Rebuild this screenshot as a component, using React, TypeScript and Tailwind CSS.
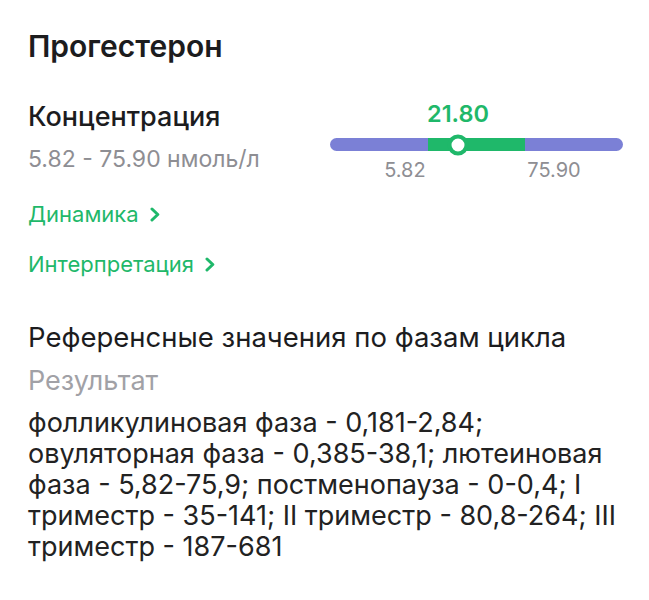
import React from "react";

const Chevron = () => (
  <svg width="10" height="15" viewBox="0 0 10 15" className="inline-block ml-[11px]" fill="none">
    <path d="M2 2 L7.8 7.5 L2 13" stroke="#1fb86a" strokeWidth="3" strokeLinecap="round" strokeLinejoin="round" />
  </svg>
);

export default function App() {
  return (
    <div className="w-[649px] h-[600px] bg-white pl-[28px] pr-[26px] pt-[28px] text-[#1c1c1e]" style={{ fontFamily: "Inter, 'Noto Sans', sans-serif" }}>
      <h1 className="text-[30px] leading-[36px] font-semibold">Прогестерон</h1>

      <div className="mt-[36px] flex items-start justify-between">
        <div className="pt-[1px] flex flex-col">
          <div className="text-[27px] leading-[32px] font-medium">Концентрация</div>
          <div className="mt-[12px] text-[23px] leading-[28px] text-[#8e8e93]">5.82 - 75.90 нмоль/л</div>
          <div className="mt-[27px] text-[22px] leading-[28px] text-[#1fb86a] flex items-center">Динамика<Chevron /></div>
          <div className="mt-[22px] text-[22px] leading-[28px] text-[#1fb86a] flex items-center">Интерпретация<Chevron /></div>
        </div>

        <div className="w-[293px] flex flex-col">
          <div className="pl-[43.7%] h-[28px]">
            <span className="inline-block -translate-x-1/2 text-[23.5px] leading-[28px] font-semibold text-[#1fb86a]">21.80</span>
          </div>
          <div className="relative mt-[10px] h-[13px]">
            <div className="flex h-full rounded-full overflow-hidden">
              <div className="flex-1 bg-[#7b80d6]" />
              <div className="flex-1 bg-[#1fb86a]" />
              <div className="flex-1 bg-[#7b80d6]" />
            </div>
            <div className="absolute left-[43.7%] top-1/2 -translate-x-1/2 -translate-y-1/2 w-[21px] h-[21px] rounded-full bg-white border-[4px] border-[#1fb86a]" />
          </div>
          <div className="mt-[7px] grid grid-cols-3 text-[20px] leading-[24px] text-[#8e8e93]">
            <div className="text-right pr-[2px]">5.82</div>
            <div />
            <div className="text-left pl-[2px]">75.90</div>
          </div>
        </div>
      </div>

      <div className="mt-[42px] text-[27.5px] leading-[34px]">Референсные значения по фазам цикла</div>
      <div className="mt-[10px] text-[27px] leading-[34px] text-[#a1a1a6]">Результат</div>
      <div className="mt-[9px] text-[27px] leading-[31px] text-[#222222]">
        фолликулиновая фаза - 0,181-2,84; овуляторная фаза - 0,385-38,1; лютеиновая фаза - 5,82-75,9; постменопауза - 0-0,4; I триместр - 35-141; II триместр - 80,8-264; III триместр - 187-681
      </div>
    </div>
  );
}
